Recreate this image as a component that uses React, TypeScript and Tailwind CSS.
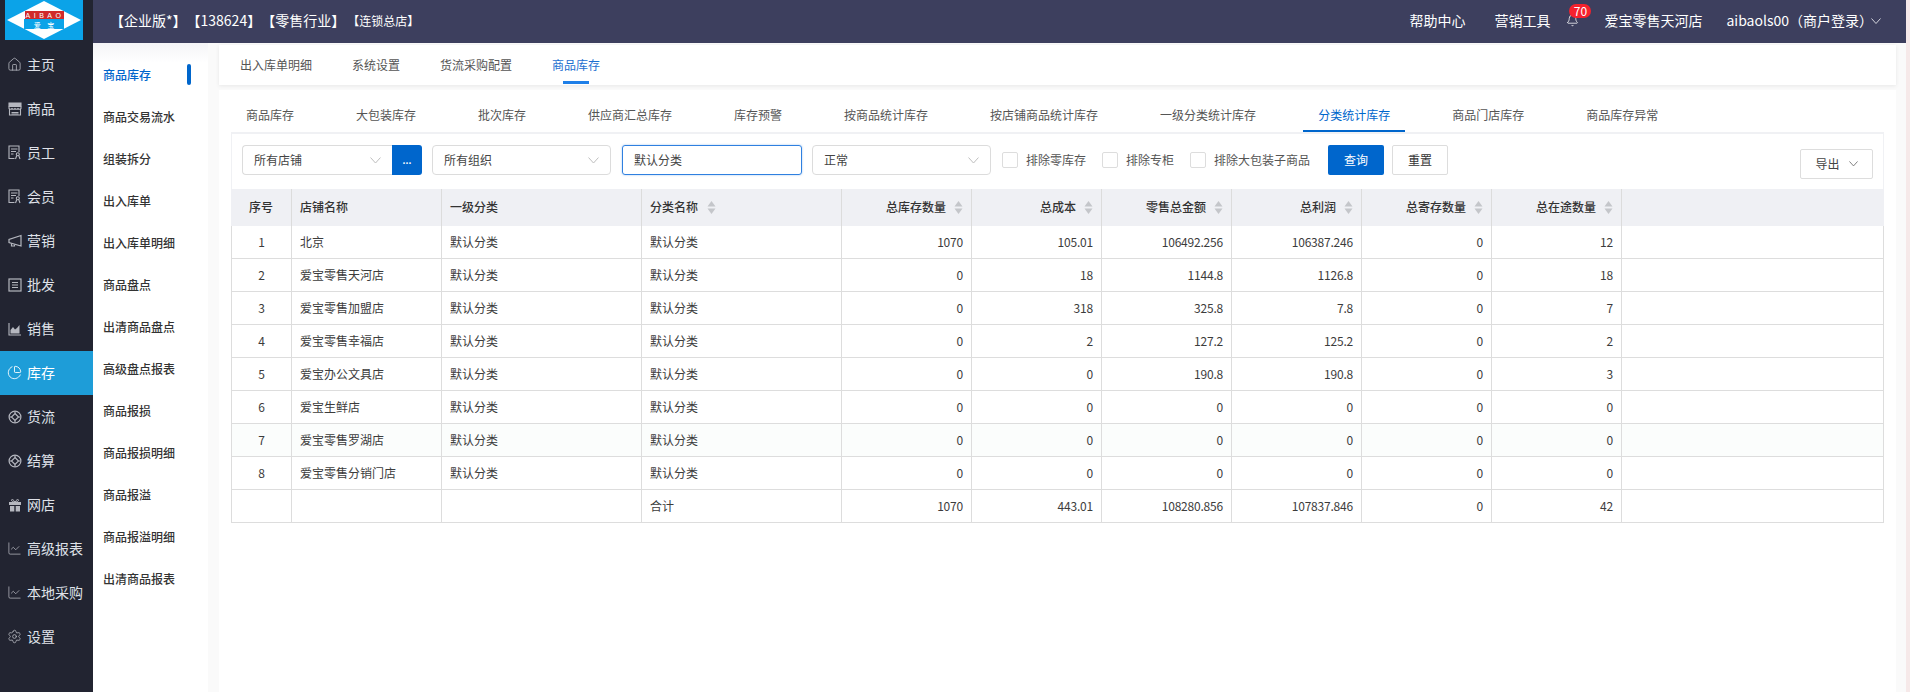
import React from "react";
import { House, ChartPie, ChartLine, Settings, Bell } from "lucide-react";

const StoreIcon = () => (
  <svg width="14" height="14" viewBox="0 0 14 14" fill="none" stroke="currentColor" strokeWidth="1.1">
    <path d="M1 1h12v3.500H1z" fill="currentColor" />
    <path d="M1 4.500v2c1 1 2 1 3 0 1 1 2 1 3 0 1 1 2 1 3 0 1 1 2 1 3 0v-2" />
    <path d="M1.500 7v6h11V7" />
    <path d="M3.500 10.500h7M3.500 12h7" />
  </svg>
);
const MegaphoneIcon = () => (
  <svg width="14" height="14" viewBox="0 0 14 14" fill="none" stroke="currentColor" strokeWidth="1.2">
    <path d="M1 5.500v3l12 3.500V1.500z" />
    <path d="M3.500 9.500v2.500h3v-1.300" />
  </svg>
);
const DocPerson = () => (
  <svg width="14" height="15" viewBox="0 0 14 15" fill="none" stroke="currentColor" strokeWidth="1.1">
    <path d="M6.500 13.500H1V1h10v6" />
    <path d="M3 4h6.500M3 6.500h5M3 9h2.500" />
    <circle cx="9.800" cy="9.300" r="1.500" />
    <path d="M7.500 14l1.200-3.200M12 14l-1.200-3.200" />
  </svg>
);
const Wholesale = () => (
  <svg width="14" height="14" viewBox="0 0 14 14" fill="none" stroke="currentColor" strokeWidth="1.2">
    <rect x="1" y="1" width="12" height="12" />
    <path d="M4 4.500h6M4 7h6M4 9.500h6" />
  </svg>
);
const AreaSales = () => (
  <svg width="14" height="14" viewBox="0 0 14 14" fill="none" stroke="currentColor">
    <path d="M1 1v12h12" strokeWidth="1.1" />
    <path d="M2.500 11.500V8l2.500-3 2 2.500 2-1.500 2.500-3v8.500z" fill="currentColor" stroke="none" />
  </svg>
);
const Logistics = () => (
  <svg width="14" height="14" viewBox="0 0 14 14" fill="none" stroke="currentColor" strokeWidth="1.2">
    <circle cx="7" cy="7" r="5.900" />
    <path d="M7 3.500L10.500 7 7 10.500 3.500 7z" />
    <path d="M1.500 7h2M10.500 7h2M7 1.500v2M7 10.500v2" />
  </svg>
);
const GiftIcon = () => (
  <svg width="14" height="14" viewBox="0 0 14 14" fill="currentColor">
    <path d="M1 4h12v3H1zM2 8h4.300v5.500H2zM7.700 8H12v5.500H7.700z" />
    <path d="M7 4C5.500 1.500 3.500.800 3.500 2.300 3.500 3.500 5.500 4 7 4c1.500 0 3.500-.5 3.500-1.700C10.500.8 8.500 1.500 7 4z" fill="none" stroke="currentColor" strokeWidth="1" />
  </svg>
);

const menu: [string, React.ReactNode][] = [
  ["主页", <House size={15} strokeWidth={1.3} />],
  ["商品", <StoreIcon />],
  ["员工", <DocPerson />],
  ["会员", <DocPerson />],
  ["营销", <MegaphoneIcon />],
  ["批发", <Wholesale />],
  ["销售", <AreaSales />],
  ["库存", <ChartPie size={15} strokeWidth={1.4} />],
  ["货流", <Logistics />],
  ["结算", <Logistics />],
  ["网店", <GiftIcon />],
  ["高级报表", <ChartLine size={15} strokeWidth={1.2} />],
  ["本地采购", <ChartLine size={15} strokeWidth={1.2} />],
  ["设置", <Settings size={15} strokeWidth={1.3} />],
];

const subMenu = [
  "商品库存", "商品交易流水", "组装拆分", "出入库单", "出入库单明细", "商品盘点", "出清商品盘点",
  "高级盘点报表", "商品报损", "商品报损明细", "商品报溢", "商品报溢明细", "出清商品报表",
];

const topTabs = ["出入库单明细", "系统设置", "货流采购配置", "商品库存"];
const tabs = [
  "商品库存", "大包装库存", "批次库存", "供应商汇总库存", "库存预警", "按商品统计库存",
  "按店铺商品统计库存", "一级分类统计库存", "分类统计库存", "商品门店库存", "商品库存异常",
];

const stores = ["北京", "爱宝零售天河店", "爱宝零售加盟店", "爱宝零售幸福店", "爱宝办公文具店", "爱宝生鲜店", "爱宝零售罗湖店", "爱宝零售分销门店"];
const nums = [
  ["1070", "105.01", "106492.256", "106387.246", "0", "12"],
  ["0", "18", "1144.8", "1126.8", "0", "18"],
  ["0", "318", "325.8", "7.8", "0", "7"],
  ["0", "2", "127.2", "125.2", "0", "2"],
  ["0", "0", "190.8", "190.8", "0", "3"],
  ["0", "0", "0", "0", "0", "0"],
  ["0", "0", "0", "0", "0", "0"],
  ["0", "0", "0", "0", "0", "0"],
];
const totals = ["1070", "443.01", "108280.856", "107837.846", "0", "42"];
const numHeads = ["总库存数量", "总成本", "零售总金额", "总利润", "总寄存数量", "总在途数量"];

const Chevron = ({ w = 11, color = "#bdbdbd" }: { w?: number; color?: string }) => (
  <svg width={w} height={w * 0.6} viewBox="0 0 10 6" fill="none" stroke={color} strokeWidth="0.9">
    <path d="M.5.5L5 5.500 9.500.5" />
  </svg>
);

const Sort = () => (
  <svg width="9" height="13" viewBox="0 0 9 13" className="shrink-0">
    <path d="M4.500 0L8.500 5.500H.5z" fill="#c4c6ca" />
    <path d="M4.500 13L8.500 7.500H.5z" fill="#c4c6ca" />
  </svg>
);

const Select = ({ label, className }: { label: string; className: string }) => (
  <div className={`h-[30px] flex items-center justify-between border border-[#dcdcdc] pl-[11px] pr-[11px] text-[12px] text-[#444] ${className}`}>
    <span>{label}</span>
    <Chevron />
  </div>
);

const Check = ({ label, className }: { label: string; className: string }) => (
  <label className={`flex items-center gap-2 text-[12px] text-[#555] ${className}`}>
    <span className="w-4 h-4 rounded-[2px] border border-[#dddddd] bg-white" />
    {label}
  </label>
);

const Logo = () => (
  <svg width="78" height="40" viewBox="0 0 78 40" className="ml-[5px] block">
    <rect width="78" height="40" fill="#0ba3e8" />
    <path d="M2 20L39 1l37 19-37 19z" fill="#fff" />
    <rect x="19" y="19" width="40" height="10" fill="#0ba3e8" />
    <rect x="20" y="11" width="39" height="8" fill="#d02a2a" />
    <text x="40" y="17.500" textAnchor="middle" fontSize="7" fill="#fff" letterSpacing="3.500" fontFamily="Liberation Sans, sans-serif">AIBAO</text>
    <text x="39" y="27.500" textAnchor="middle" fontSize="7" fill="#fff" fontFamily="Noto Sans CJK SC, sans-serif" xmlSpace="preserve">爱    宝</text>
  </svg>
);

const td = "border-r border-b border-[#dddddd] h-[33px] text-[12px] text-[#3c3c3c] px-[8px]";

export default function App() {
  return (
    <div className="flex w-[1910px] h-[692px] overflow-hidden bg-[#f6e9e9] [text-spacing-trim:space-all] font-['Noto_Sans_CJK_SC','Noto_Sans',sans-serif]">
      <aside className="w-[93px] shrink-0 bg-[#222431]">
        <div className="h-[43px]">
          <Logo />
        </div>
        {menu.map(([name, icon], i) => (
          <div
            key={name}
            className={`h-[44px] flex items-center pl-[7px] pb-[1px] text-[14px] ${i === 7 ? "bg-[#1e9dd8] text-white" : "text-[#dfe1e8]"}`}
          >
            <span className={`w-[15px] flex justify-center shrink-0 ${i === 7 ? "text-white" : "text-[#b5b7bf]"}`}>{icon}</span>
            <span className="ml-[5px] whitespace-nowrap">{name}</span>
          </div>
        ))}
      </aside>

      <div className="w-[1813px] shrink-0 flex flex-col">
        <header className="h-[43px] shrink-0 bg-[#3d3f5e] flex items-center pl-[17px] pr-[25px] pb-[2px] text-white text-[14px]">
          <span>【企业版*】【138624】【零售行业】</span>
          <span className="text-[12px] ml-[2px]">【连锁总店】</span>
          <span className="ml-auto">帮助中心</span>
          <span className="ml-[29px]">营销工具</span>
          <span className="relative ml-[16px] w-[13px] flex justify-center">
            <Bell size={13} strokeWidth={1.4} />
            <span className="absolute left-[3px] top-[-10px] w-[22px] h-[14px] rounded-full bg-[#f5222d] text-[12px] leading-[14px] text-center">70</span>
          </span>
          <span className="ml-[25px]">爱宝零售天河店</span>
          <span className="ml-[24px]">aibaols00（商户登录）</span>
          <span className="ml-[-2px]"><Chevron w={10} color="#e4e4ea" /></span>
        </header>

        <div className="flex-1 flex min-h-0">
          <nav className="w-[115px] shrink-0 bg-gradient-to-b from-[#f4f4f7] via-white via-[3%] to-white pt-[11px]">
            {subMenu.map((name, i) => (
              <div
                key={name}
                className={`h-[42px] flex items-center pl-[10px] text-[12px] font-medium ${i === 0 ? "text-[#0066cc] relative" : "text-[#333]"}`}
              >
                {name}
                {i === 0 && <span className="absolute left-[94px] top-[10px] w-1 h-[21px] rounded-sm bg-[#0066cc]" />}
              </div>
            ))}
          </nav>

          <main className="flex-1 bg-[#fafafa] pl-[11px] pr-[10px] pt-[2px] flex flex-col gap-[5px] min-w-0">
            <div className="h-[40px] shrink-0 bg-white shadow-[0_1px_4px_rgba(0,0,0,0.08)] flex pl-[21px] gap-[40px] text-[12px] text-[#555]">
              {topTabs.map((t) => (
                <div key={t} className={`relative flex items-center ${t === "商品库存" ? "text-[#1d6fd0]" : ""}`}>
                  {t}
                  {t === "商品库存" && <span className="absolute left-[11px] bottom-[1px] w-[26px] h-[3px] bg-[#1e7fe8]" />}
                </div>
              ))}
            </div>

            <section className="flex-1 bg-white px-[12px] pt-[10px]">
              <div className="flex h-[32px] gap-[32px] text-[12px] text-[#555]">
                {tabs.map((t) => (
                  <div
                    key={t}
                    className={`px-[15px] flex items-center whitespace-nowrap border-b-2 ${t === "分类统计库存" ? "text-[#0066cc] border-[#0066cc]" : "border-transparent"}`}
                  >
                    {t}
                  </div>
                ))}
              </div>
              <div className="h-[2px] bg-[#f0f1f4]" />

              <div className="border-l border-r border-[#f0f1f4]">
                <div className="flex items-start pt-[11px] pb-[10px] pl-[10px] pr-[10px]">
                  <Select label="所有店铺" className="w-[150px] rounded-l-[4px] border-r-0" />
                  <div className="w-[30px] h-[30px] bg-[#0066cc] rounded-r-[3px] flex items-center justify-center text-white text-[9px] font-bold leading-none">...</div>
                  <Select label="所有组织" className="w-[179px] ml-[10px] rounded-[4px]" />
                  <div className="w-[180px] h-[30px] ml-[11px] rounded-[3px] border border-[#2f80e0] shadow-[0_0_2px_rgba(47,128,224,0.5)] flex items-center pl-[11px] text-[12px] text-[#444]">默认分类</div>
                  <Select label="正常" className="w-[179px] ml-[10px] rounded-[4px]" />
                  <Check label="排除零库存" className="ml-[11px] h-[30px]" />
                  <Check label="排除专柜" className="ml-[16px] h-[30px]" />
                  <Check label="排除大包装子商品" className="ml-[16px] h-[30px]" />
                  <button className="w-[56px] h-[30px] ml-[18px] bg-[#0066cc] rounded-[2px] text-white text-[12px]">查询</button>
                  <button className="w-[56px] h-[30px] ml-[8px] border border-[#dddddd] rounded-[2px] text-[#333] text-[12px]">重置</button>
                  <div className="ml-auto mt-[4px] w-[73px] h-[30px] border border-[#dddddd] rounded-[2px] flex items-center justify-center gap-[9px] text-[12px] text-[#444]">
                    导出
                    <Chevron w={9} color="#666" />
                  </div>
                </div>
              </div>

              <table className="table-fixed border-separate border-spacing-0 w-[1653px]">
                <colgroup>
                  <col className="w-[61px]" />
                  <col className="w-[150px]" />
                  <col className="w-[200px]" />
                  <col className="w-[200px]" />
                  {numHeads.map((h) => (
                    <col key={h} className="w-[130px]" />
                  ))}
                  <col className="w-[262px]" />
                </colgroup>
                <thead>
                  <tr className="h-[37px] bg-[#eff0f4] text-[12px] text-[#333]">
                    <th className="border-r border-[#dcdcdc] font-medium text-center pb-[1px]">序号</th>
                    <th className="border-r border-[#dcdcdc] font-medium text-left px-[8px] pb-[1px]">店铺名称</th>
                    <th className="border-r border-[#dcdcdc] font-medium text-left px-[8px] pb-[1px]">一级分类</th>
                    <th className="border-r border-[#dcdcdc] font-medium px-[8px] pb-[1px]">
                      <div className="flex items-center gap-[9px]">分类名称<Sort /></div>
                    </th>
                    {numHeads.map((h) => (
                      <th key={h} className="border-r border-[#dcdcdc] font-medium px-[8px] pb-[1px]">
                        <div className="flex items-center justify-end gap-[8px]">{h}<Sort /></div>
                      </th>
                    ))}
                    <th />
                  </tr>
                </thead>
                <tbody>
                  {stores.map((s, i) => (
                    <tr key={s} className={i === 6 ? "bg-[#fbfdfc]" : ""}>
                      <td className={`${td} border-l text-center`}>{i + 1}</td>
                      <td className={td}>{s}</td>
                      <td className={td}>默认分类</td>
                      <td className={td}>默认分类</td>
                      {nums[i].map((n, j) => (
                        <td key={j} className={`${td} text-right tracking-[-0.2px]`}>{n}</td>
                      ))}
                      <td className={td} />
                    </tr>
                  ))}
                  <tr>
                    <td className={`${td} border-l`} />
                    <td className={td} />
                    <td className={td} />
                    <td className={td}>合计</td>
                    {totals.map((n, j) => (
                      <td key={j} className={`${td} text-right tracking-[-0.2px]`}>{n}</td>
                    ))}
                    <td className={td} />
                  </tr>
                </tbody>
              </table>
            </section>
          </main>
        </div>
      </div>
    </div>
  );
}
